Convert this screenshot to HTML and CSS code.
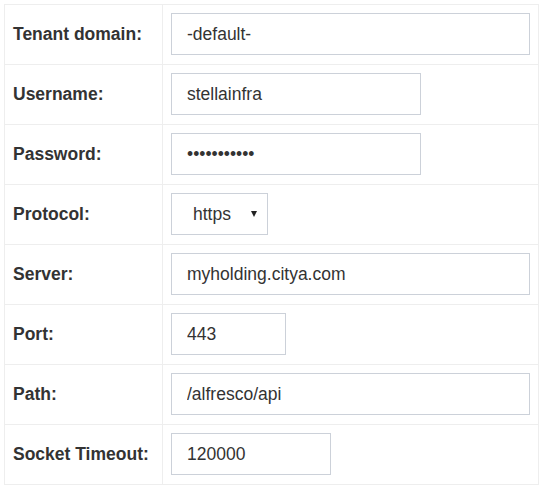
FILE: index.html
```html
<!DOCTYPE html>
<html>
<head>
<meta charset="utf-8">
<link rel="stylesheet" href="styles.css">
</head>
<body>
<table class="form">
  <tr>
    <td class="label">Tenant domain:</td>
    <td class="field"><input class="inp full" type="text" value="-default-"></td>
  </tr>
  <tr>
    <td class="label">Username:</td>
    <td class="field"><input class="inp user" type="text" value="stellainfra"></td>
  </tr>
  <tr>
    <td class="label">Password:</td>
    <td class="field"><input class="inp user" type="password" value="stellainfra"></td>
  </tr>
  <tr>
    <td class="label">Protocol:</td>
    <td class="field">
      <span class="select-wrap">
        <select class="sel"><option>https</option><option>http</option></select>
        <span class="arrow"></span>
      </span>
    </td>
  </tr>
  <tr>
    <td class="label">Server:</td>
    <td class="field"><input class="inp full" type="text" value="myholding.citya.com"></td>
  </tr>
  <tr>
    <td class="label">Port:</td>
    <td class="field"><input class="inp port" type="text" value="443"></td>
  </tr>
  <tr>
    <td class="label">Path:</td>
    <td class="field"><input class="inp full" type="text" value="/alfresco/api"></td>
  </tr>
  <tr>
    <td class="label">Socket Timeout:</td>
    <td class="field"><input class="inp timeout" type="text" value="120000"></td>
  </tr>
</table>
</body>
</html>
```
FILE: styles.css
```css
html, body {
  margin: 0;
  padding: 0;
  background: #fff;
}
body {
  padding: 4px;
  font-family: "Liberation Sans", Arial, sans-serif;
  color: #333;
}
.form {
  border-collapse: collapse;
  width: 535px;
  table-layout: fixed;
}
.form td {
  border: 1px solid #eeeeee;
  padding: 8px 8px 9px 8px;
  height: 42px;
  vertical-align: top;
}
.form td.label {
  width: 141px;
  font-weight: bold;
  font-size: 17.5px;
  line-height: 42px;
  color: #333;
  white-space: nowrap;
}
.inp {
  box-sizing: border-box;
  display: block;
  height: 42px;
  margin: 0;
  padding: 0 15px;
  border: 1px solid #ccd1d9;
  border-radius: 0;
  font-family: "Liberation Sans", Arial, sans-serif;
  font-size: 17.5px;
  color: #333;
  background: #fff;
  outline: none;
}
.full { width: 100%; }
.user { width: 250px; }
.port { width: 115px; }
.timeout { width: 160px; }
.select-wrap {
  position: relative;
  display: inline-block;
  vertical-align: top;
}
.sel {
  -webkit-appearance: none;
  appearance: none;
  box-sizing: border-box;
  display: block;
  width: 97px;
  height: 42px;
  margin: 0;
  padding: 0 0 0 21px;
  border: 1px solid #ccd1d9;
  border-radius: 0;
  background: #fff;
  font-family: "Liberation Sans", Arial, sans-serif;
  font-size: 17.5px;
  color: #333;
  outline: none;
}
.arrow {
  position: absolute;
  right: 11px;
  top: 18px;
  width: 0;
  height: 0;
  border-left: 3.5px solid transparent;
  border-right: 3.5px solid transparent;
  border-top: 6px solid #222;
  pointer-events: none;
}
```
